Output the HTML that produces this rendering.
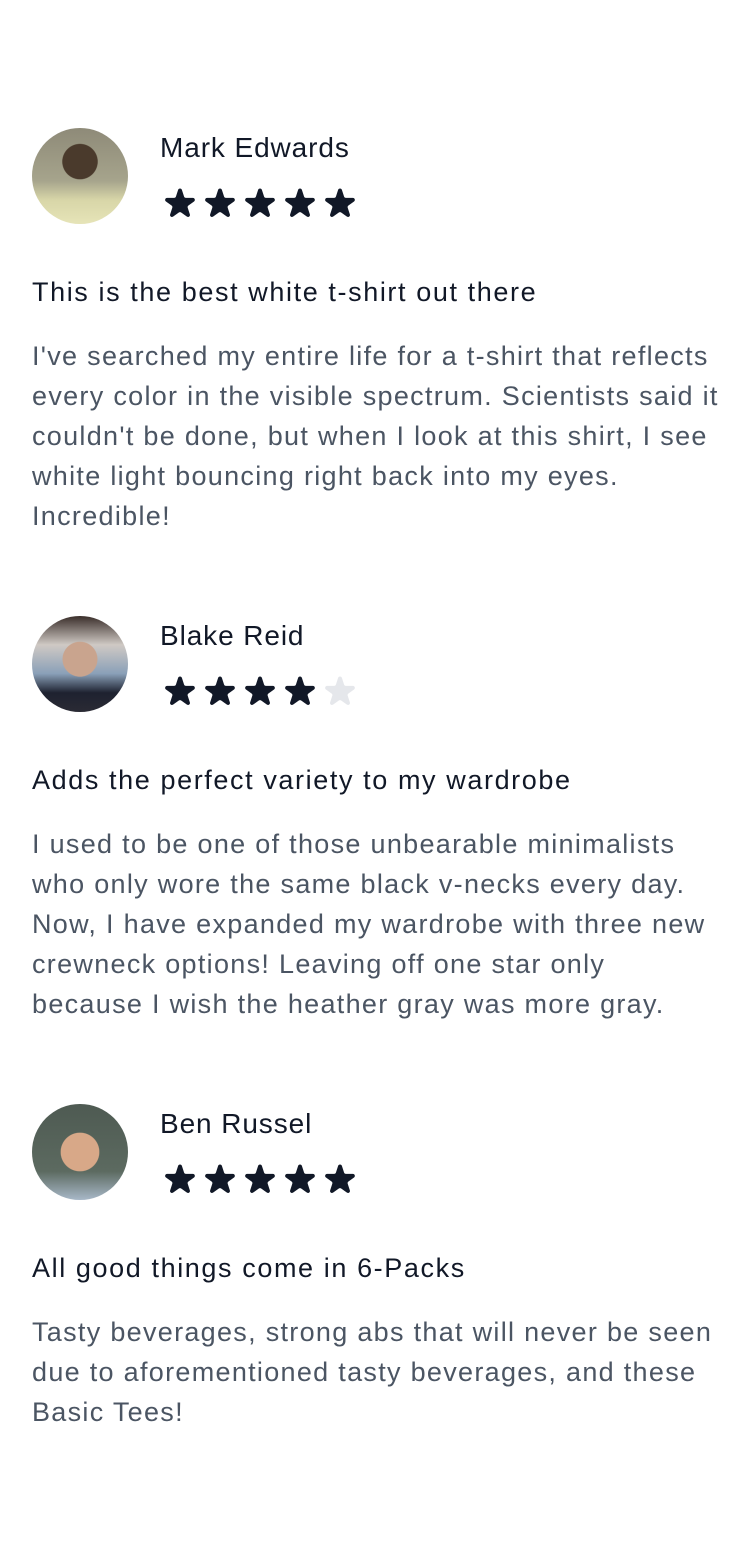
<!DOCTYPE html>
<html><head><meta charset="utf-8">
<style>
*{margin:0;padding:0;box-sizing:border-box}
body{width:750px;height:1560px;background:#fff;font-family:"Liberation Sans",sans-serif;position:relative;overflow:hidden}
.rev{position:absolute;left:32px;width:690px}
.av{position:absolute;left:0;top:0;width:96px;height:96px;border-radius:50%}
.name{position:absolute;left:128px;top:2px;font-size:28px;color:#111827;line-height:36px;letter-spacing:0.9px;white-space:nowrap}
.stars{position:absolute;left:128px;top:56px;display:flex}
.stars svg{width:40px;height:40px}
.title{position:absolute;left:0;top:146px;font-size:27px;color:#111827;line-height:36px;letter-spacing:1.6px;white-space:nowrap}
.body{position:absolute;left:0;top:208px;font-size:27px;color:#4b5563;line-height:40px;white-space:nowrap;letter-spacing:1.3px}
</style></head><body>
<svg width="0" height="0" style="position:absolute"><defs><path id="s" d="M9.049 2.927c.3-.921 1.603-.921 1.902 0l1.07 3.292a1 1 0 00.95.69h3.462c.969 0 1.371 1.24.588 1.81l-2.8 2.034a1 1 0 00-.364 1.118l1.07 3.292c.3.921-.755 1.688-1.54 1.118l-2.8-2.034a1 1 0 00-1.175 0l-2.8 2.034c-.784.57-1.838-.197-1.539-1.118l1.07-3.292a1 1 0 00-.364-1.118L2.98 8.72c-.783-.57-.38-1.81.588-1.81h3.461a1 1 0 00.951-.69l1.07-3.292z"/></defs></svg>

<div class="rev" style="top:128px">
<div class="av" style="background:radial-gradient(circle at 50% 35%,#4a3a2c 0 22%,transparent 23%),linear-gradient(180deg,#8e8a78 0%,#a6a48c 55%,#d8d6a8 75%,#e6e4b8 100%)"></div>
<div class="name">Mark Edwards</div>
<div class="stars"><svg viewBox="0 0 20 20" fill="#111827"><use href="#s"/></svg><svg viewBox="0 0 20 20" fill="#111827"><use href="#s"/></svg><svg viewBox="0 0 20 20" fill="#111827"><use href="#s"/></svg><svg viewBox="0 0 20 20" fill="#111827"><use href="#s"/></svg><svg viewBox="0 0 20 20" fill="#111827"><use href="#s"/></svg></div>
<div class="title">This is the best white t-shirt out there</div>
<div class="body">I've searched my entire life for a t-shirt that reflects<br>every color in the visible spectrum. Scientists said it<br>couldn't be done, but when I look at this shirt, I see<br>white light bouncing right back into my eyes.<br>Incredible!</div>
</div>

<div class="rev" style="top:616px">
<div class="av" style="background:radial-gradient(circle at 50% 45%,#c9a48e 0 24%,transparent 25%),linear-gradient(180deg,#3a2e2a 0%,#cfc9c4 30%,#8aa0b8 60%,#1e2230 80%,#2a2a34 100%)"></div>
<div class="name">Blake Reid</div>
<div class="stars"><svg viewBox="0 0 20 20" fill="#111827"><use href="#s"/></svg><svg viewBox="0 0 20 20" fill="#111827"><use href="#s"/></svg><svg viewBox="0 0 20 20" fill="#111827"><use href="#s"/></svg><svg viewBox="0 0 20 20" fill="#111827"><use href="#s"/></svg><svg viewBox="0 0 20 20" fill="#e5e7eb"><use href="#s"/></svg></div>
<div class="title">Adds the perfect variety to my wardrobe</div>
<div class="body">I used to be one of those unbearable minimalists<br>who only wore the same black v-necks every day.<br>Now, I have expanded my wardrobe with three new<br>crewneck options! Leaving off one star only<br>because I wish the heather gray was more gray.</div>
</div>

<div class="rev" style="top:1104px">
<div class="av" style="background:radial-gradient(circle at 50% 50%,#d8a888 0 28%,transparent 29%),linear-gradient(180deg,#4e5a52 0%,#5c6a60 70%,#a8b8c8 100%)"></div>
<div class="name">Ben Russel</div>
<div class="stars"><svg viewBox="0 0 20 20" fill="#111827"><use href="#s"/></svg><svg viewBox="0 0 20 20" fill="#111827"><use href="#s"/></svg><svg viewBox="0 0 20 20" fill="#111827"><use href="#s"/></svg><svg viewBox="0 0 20 20" fill="#111827"><use href="#s"/></svg><svg viewBox="0 0 20 20" fill="#111827"><use href="#s"/></svg></div>
<div class="title">All good things come in 6-Packs</div>
<div class="body">Tasty beverages, strong abs that will never be seen<br>due to aforementioned tasty beverages, and these<br>Basic Tees!</div>
</div>
</body></html>
